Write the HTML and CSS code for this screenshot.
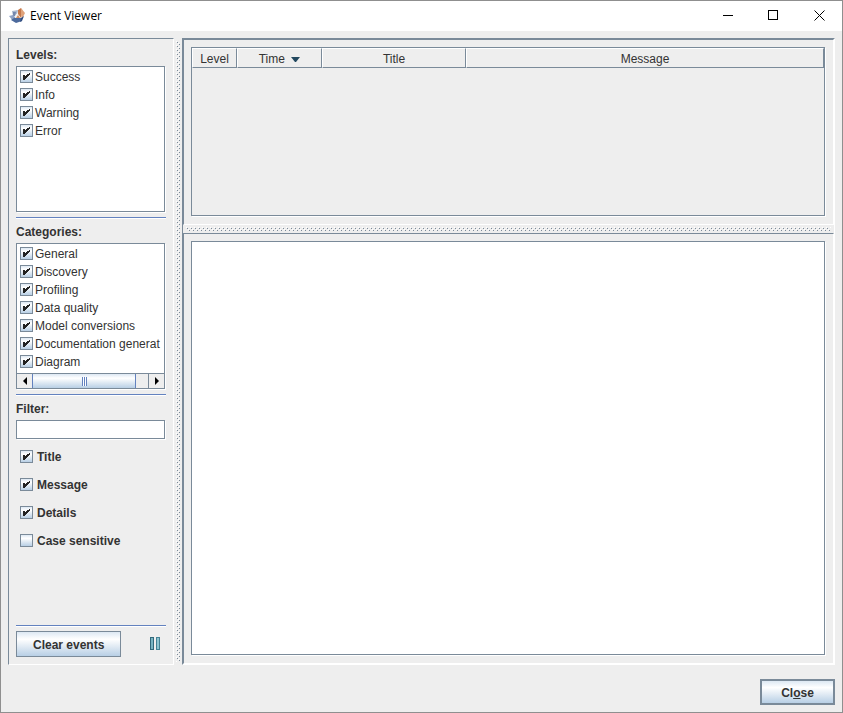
FILE: index.html
```html
<!DOCTYPE html>
<html lang="en">
	<head>
		<meta charset="UTF-8" />
		<meta name="viewport" content="width=device-width, initial-scale=1.0" />
		<title>Event Viewer</title>
		<link rel="stylesheet" href="styles.css">
	</head>
	<body>
		<div class="window">
			<header class="titlebar">
				<svg class="app-icon" width="17" height="16" viewBox="0 0 17 16">
					<path d="M3 3l6-1-1 5-4 1z" fill="#a8b6cd" />
					<path d="M4 4l3 0-1 4H4z" fill="#7488ad" />
					<path d="M0 8l4-1 3 3-3 3z" fill="#8da2c5" />
					<path d="M2 12l3-2h7l1 3-6 2z" fill="#4c6a9c" />
					<path d="M6 10l1-4 4-1 1 5z" fill="#f4f1ee" />
					<path d="M9 2l3-2 1 3-1 7-3-4z" fill="#c4774a" />
					<path d="M12 0l4 5-3 6-1-4z" fill="#dfa27a" />
					<path d="M7 10l2-3 2 3z" fill="#cf8c62" />
					<path d="M12 10l3-2-2 5-2 1z" fill="#304d80" />
				</svg>
				<span class="caption">Event Viewer</span>
				<button class="window-button" aria-label="Minimize">
					<svg width="12" height="12" shape-rendering="crispEdges"><path d="M2 5h10v1h-10z" /></svg>
				</button>
				<button class="window-button" aria-label="Maximize">
					<svg width="12" height="12" shape-rendering="crispEdges"><path d="M1.500 .5h9v9h-9z" fill="none" stroke="#000" /></svg>
				</button>
				<button class="window-button" aria-label="Close window">
					<svg width="12" height="12"><path d="M1.500 .5l10 10M11.500 .5l-10 10" fill="none" stroke="#000" /></svg>
				</button>
			</header>

			<main class="content">
				<aside class="sidebar">
					<h2>Levels:</h2>
					<div class="list">
						<label><input type="checkbox" checked />Success</label>
						<label><input type="checkbox" checked />Info</label>
						<label><input type="checkbox" checked />Warning</label>
						<label><input type="checkbox" checked />Error</label>
					</div>
					<hr />
					<h2>Categories:</h2>
					<div class="list">
						<div class="list-view">
							<label><input type="checkbox" checked />General</label>
							<label><input type="checkbox" checked />Discovery</label>
							<label><input type="checkbox" checked />Profiling</label>
							<label><input type="checkbox" checked />Data quality</label>
							<label><input type="checkbox" checked />Model conversions</label>
							<label><input type="checkbox" checked />Documentation generat</label>
							<label><input type="checkbox" checked />Diagram</label>
						</div>
						<div class="scrollbar">
							<button class="scroll-left" aria-label="Scroll left">
								<svg width="4" height="8"><path d="M4 0v8l-4-4z" /></svg>
							</button>
							<div class="track">
								<div class="thumb"><span class="grip"></span></div>
							</div>
							<button class="scroll-right" aria-label="Scroll right">
								<svg width="4" height="8"><path d="M0 0v8l4-4z" /></svg>
							</button>
						</div>
					</div>
					<hr />
					<h2><label for="filter">Filter:</label></h2>
					<input class="filter" id="filter" type="text" />
					<div class="options">
						<label><input type="checkbox" checked />Title</label>
						<label><input type="checkbox" checked />Message</label>
						<label><input type="checkbox" checked />Details</label>
						<label><input type="checkbox" />Case sensitive</label>
					</div>
					<hr />
					<div class="actions">
						<button class="button">Clear events</button>
						<button class="pause" aria-label="Pause">
							<svg width="10" height="14" shape-rendering="crispEdges">
								<path d="M.5 .5h3v12h-3z" fill="#78b4c3" stroke="#31697b" />
								<path d="M6.500 .5h3v12h-3z" fill="#8cc4d0" stroke="#458295" />
							</svg>
						</button>
					</div>
				</aside>

				<div class="divider divider-vertical">
					<svg width="100%" height="100%" shape-rendering="crispEdges">
						<defs>
							<pattern id="bumps" width="4" height="4" patternUnits="userSpaceOnUse">
								<path d="M0 0h1v1h-1zM2 2h1v1h-1z" fill="#fff" />
								<path d="M1 1h1v1h-1zM3 3h1v1h-1z" fill="#7a8a99" />
							</pattern>
						</defs>
						<rect width="100%" height="100%" fill="url(#bumps)" />
					</svg>
				</div>

				<div class="split">
					<section class="pane pane-events">
						<div class="box">
							<table class="events">
								<thead>
									<tr>
										<th class="col-level">Level</th>
										<th class="col-time">Time <svg width="9" height="5"><path d="M0 0h9l-4 5h-1z" fill="#22485f" /></svg></th>
										<th class="col-title">Title</th>
										<th>Message</th>
									</tr>
								</thead>
							</table>
						</div>
					</section>
					<div class="divider divider-horizontal">
						<svg width="100%" height="100%" shape-rendering="crispEdges">
							<rect width="100%" height="100%" fill="url(#bumps)" />
						</svg>
					</div>
					<section class="pane pane-details">
						<textarea class="box details" aria-label="Event details" readonly></textarea>
					</section>
				</div>
			</main>

			<footer class="footer">
				<button class="button button-default">Cl<u>o</u>se</button>
			</footer>
		</div>
	</body>
</html>
```
FILE: styles.css
```css
* {
	box-sizing: border-box;
}

body {
	margin: 0;
	font: 12px/18px "Liberation Sans", Arial, sans-serif;
	color: #333;
}

button {
	margin: 0;
	padding: 0;
	border: none;
	background: none;
	font: inherit;
	color: inherit;
}

svg {
	display: block;
}

.window {
	display: flex;
	flex-direction: column;
	height: 100vh;
	border: 1px solid #8f8f8f;
	background-color: #eee;
}

/* Title bar */

.titlebar {
	display: flex;
	flex: 0 0 30px;
	align-items: center;
	padding-left: 8px;
	background-color: #fff;
	color: #000;
}

.caption {
	flex: 1;
	padding-left: 4px;
	font-family: "Open Sans", "Noto Sans", sans-serif;
}

.window-button {
	display: flex;
	align-items: center;
	justify-content: center;
	width: 46px;
	height: 30px;
}

.content {
	display: flex;
	flex: 1;
	min-height: 0;
	padding: 7px 7px 0;
}

/* Sidebar */

.sidebar {
	display: flex;
	flex: 0 0 166px;
	flex-direction: column;
	min-width: 0;
	padding: 7px;
	border: 1px solid #7a8a99;
	border-right-color: #fff;
	border-bottom-color: #fff;
}

h2 {
	margin: 0 0 2px;
	font-size: 12px;
}

hr {
	width: 100%;
	height: 2px;
	margin: 4px 0;
	border: none;
	border-top: 1px solid #6382bf;
	background-color: #fff;
}

.list {
	display: flex;
	flex: 0 0 146px;
	flex-direction: column;
	margin: 0 1px 1px 0;
	border: 1px solid #7a8a99;
	background-color: #fff;
	box-shadow: 1px 1px #fff;
}

.list-view {
	flex: 1;
	overflow: hidden;
}

.list label,
.options label {
	display: flex;
	line-height: 15px;
	white-space: nowrap;
}

.list label {
	gap: 2px;
	padding: 3px 0 0 3px;
}

input[type="checkbox"] {
	appearance: none;
	flex: none;
	width: 13px;
	height: 13px;
	margin: 0;
	border: 1px solid #7a8a99;
	background: linear-gradient(#dde8f3, #fff 30%, #b8cfe5);
}

input[type="checkbox"]:checked {
	background:
		url("data:image/svg+xml,%3Csvg xmlns='http://www.w3.org/2000/svg' width='11' height='11' shape-rendering='crispEdges'%3E%3Cpath d='M2 4h2v1h1v-1h1v-1h2v-1h1v2h-1v1h-1v1h-1v1h-1v1h-1v1h-2z' fill='%23222'/%3E%3C/svg%3E") no-repeat,
		linear-gradient(#dde8f3, #fff 30%, #b8cfe5);
}

.scrollbar {
	display: flex;
	flex: 0 0 15px;
	border-top: 1px solid #7a8a99;
	background-color: #eee;
}

.scroll-left,
.scroll-right {
	display: flex;
	flex: 0 0 15px;
	align-items: center;
	justify-content: center;
}

.scroll-right {
	flex-basis: 16px;
	border-left: 1px solid #7a8a99;
}

.track {
	flex: 1;
}

.thumb {
	display: flex;
	align-items: center;
	justify-content: center;
	width: 90%;
	height: 100%;
	border: solid #6382bf;
	border-width: 0 1px;
	background: linear-gradient(#dde8f3, #fff 30%, #b8cfe5);
}

.grip {
	width: 5px;
	height: 9px;
	background: repeating-linear-gradient(90deg, #6382bf 0 1px, #fff 1px 2px);
}

.filter {
	height: 19px;
	margin: 0 1px 1px 0;
	padding: 0 2px;
	border: 1px solid #7a8a99;
	background-color: #fff;
	box-shadow: 1px 1px #fff;
	font: inherit;
	line-height: 15px;
}

.options {
	flex: 1;
	padding: 3px 0 0 4px;
	font-weight: bold;
}

.options label {
	gap: 4px;
	padding: 7px 0 6px;
}

.actions {
	display: flex;
	align-items: center;
	justify-content: space-between;
	padding-right: 6px;
}

.button {
	height: 26px;
	padding: 2px 16px 0;
	border: 1px solid #7a8a99;
	background: linear-gradient(#dde8f3, #fff 30%, #b8cfe5);
	font-weight: bold;
}

/* Split panes */

.divider-vertical {
	flex: 0 0 8px;
	padding: 3px 2px;
}

.divider-vertical svg {
	width: 4px;
}

.divider-horizontal {
	flex: 0 0 8px;
	padding: 2px 3px;
}

.divider-horizontal svg {
	height: 4px;
}

.split {
	display: flex;
	flex: 1;
	flex-direction: column;
	min-width: 0;
}

.split,
.pane {
	border: 1px solid #7a8a99;
	border-right-color: #fff;
	border-bottom-color: #fff;
}

.pane {
	display: flex;
	padding: 7px 8px 8px 7px;
}

.pane-events {
	flex: 0 0 186px;
}

.pane-details {
	flex: 1;
}

.box {
	flex: 1;
	border: 1px solid #7a8a99;
	box-shadow: 1px 1px #fff;
}

.details {
	margin: 0;
	padding: 3px;
	border-radius: 0;
	background-color: #fff;
	font: inherit;
	resize: none;
}

.events {
	width: 100%;
	border-collapse: separate;
	border-spacing: 0;
	table-layout: fixed;
}

.events th {
	height: 20px;
	padding: 2px 0 0;
	border: 1px solid #7a8a99;
	border-top-color: #fff;
	border-left-color: #fff;
	font-weight: normal;
	line-height: 16px;
}

.events svg {
	display: inline-block;
	margin-left: 3px;
	vertical-align: middle;
}

.events .col-level {
	width: 45px;
}

.events .col-time {
	width: 85px;
}

.events .col-title {
	width: 144px;
}

/* Footer */

.footer {
	display: flex;
	justify-content: flex-end;
	padding: 14px 7px 7px;
}

.button-default {
	min-width: 75px;
	border-width: 2px;
}
```
